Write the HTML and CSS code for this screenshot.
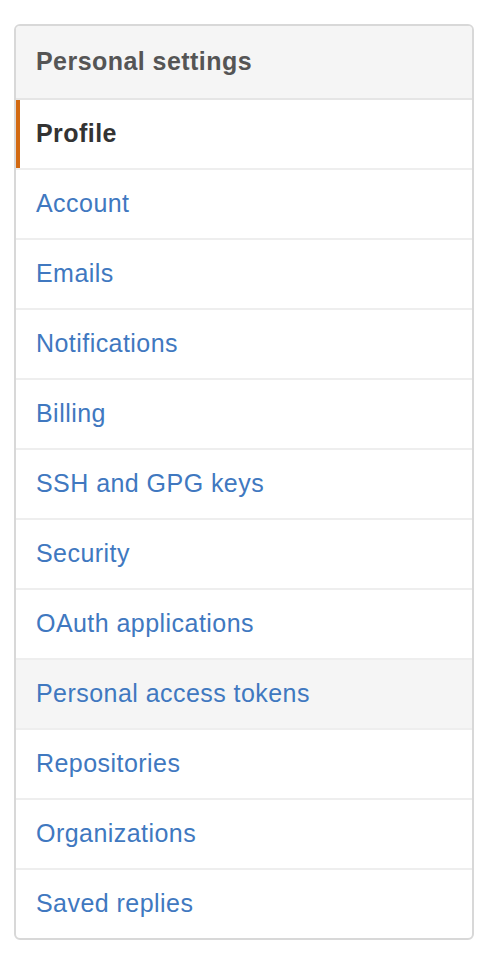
FILE: index.html
```html
<!DOCTYPE html>
<html lang="en">
<head>
    <meta charset="UTF-8">
    <meta name="viewport" content="width=device-width, initial-scale=1.0">
    <title>Personal settings</title>
    <link rel="stylesheet" href="styles.css">
</head>
<body>
    <nav class="menu">
        <h3 class="menu-heading">Personal settings</h3>
        <a class="menu-item selected" href="#">Profile</a>
        <a class="menu-item" href="#">Account</a>
        <a class="menu-item" href="#">Emails</a>
        <a class="menu-item" href="#">Notifications</a>
        <a class="menu-item" href="#">Billing</a>
        <a class="menu-item" href="#">SSH and GPG keys</a>
        <a class="menu-item" href="#">Security</a>
        <a class="menu-item" href="#">OAuth applications</a>
        <a class="menu-item hover" href="#">Personal access tokens</a>
        <a class="menu-item" href="#">Repositories</a>
        <a class="menu-item" href="#">Organizations</a>
        <a class="menu-item" href="#">Saved replies</a>
    </nav>
</body>
</html>
```

FILE: styles.css
```css
* {
    margin: 0;
    padding: 0;
    box-sizing: border-box;
}

body {
    background-color: #fff;
    font-family: "Liberation Sans", Arial, sans-serif;
    padding: 24px 14px 0 14px;
}

/* Settings menu */
.menu {
    width: 460px;
    border: 2px solid #d8d8d8;
    border-radius: 6px;
    overflow: hidden;
    background-color: #fff;
}

.menu-heading {
    display: block;
    padding: 21px 20px 23px;
    line-height: 28px;
    font-size: 25px;
    letter-spacing: 0.45px;
    font-weight: bold;
    color: #555;
    background-color: #f5f5f5;
    border-bottom: 2px solid #e5e5e5;
}

.menu-item {
    display: block;
    position: relative;
    padding: 19px 20px 21px;
    line-height: 28px;
    font-size: 25px;
    letter-spacing: 0.45px;
    color: #4078c0;
    text-decoration: none;
    border-bottom: 2px solid #eee;
}

.menu-item:last-child {
    border-bottom: none;
}

.menu-item.hover {
    background-color: #f5f5f5;
}

.menu-item.selected {
    font-weight: bold;
    color: #333;
}

.menu-item.selected::before {
    content: "";
    position: absolute;
    top: 0;
    bottom: 0;
    left: 0;
    width: 4px;
    background-color: #d26911;
}
```
